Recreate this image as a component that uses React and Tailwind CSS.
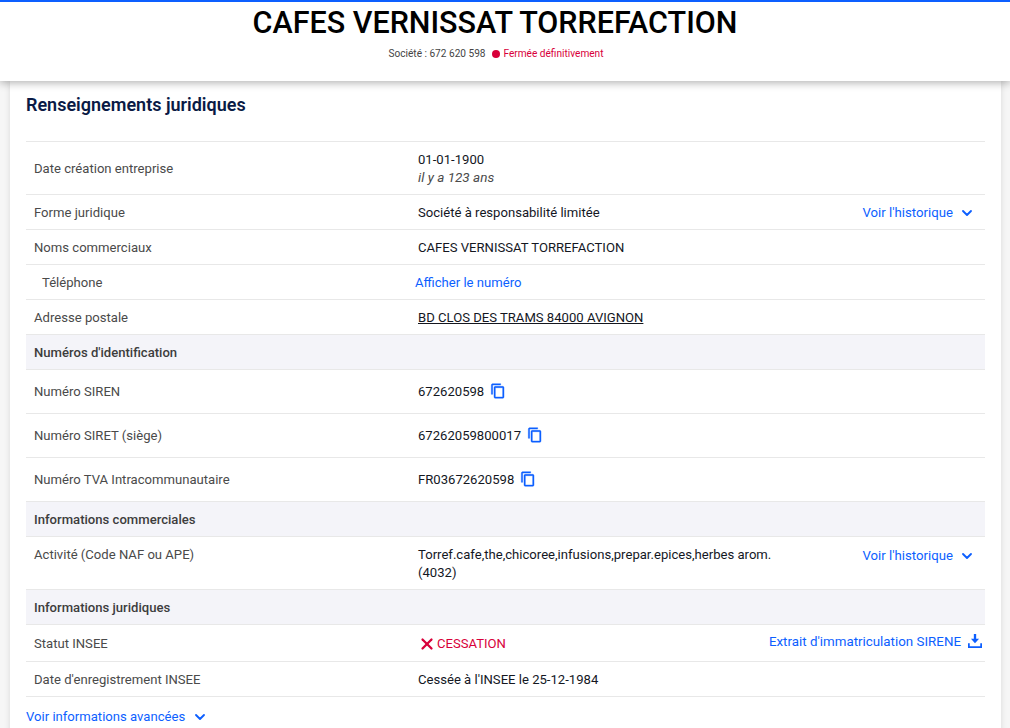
import { ChevronDown, X } from "lucide-react";

const CopyIcon = () => (
  <svg viewBox="0 0 24 24" className="mb-[1px] ml-[6px] h-[16px] w-[16px] fill-[#0d5fff] stroke-[#0d5fff] stroke-[0.6]">
    <path d="M16 1H4c-1.1 0-2 .9-2 2v14h2V3h12V1zm3 4H8c-1.1 0-2 .9-2 2v14c0 1.1.9 2 2 2h11c1.1 0 2-.9 2-2V7c0-1.1-.9-2-2-2zm0 16H8V7h11v14z" />
  </svg>
);

const DownloadIcon = () => (
  <svg viewBox="0 0 24 24" className="mb-[2px] ml-[7px] h-[14px] w-[14px] fill-[#0d5fff]">
    <path d="M10 0h4v8h5l-7 8-7-8h5zM0 16h3v5h18v-5h3v8H0z" />
  </svg>
);

const History = () => (
  <a className="flex items-center pr-[10px] text-[13.2px] text-[#0d5fff]">
    Voir l'historique
    <ChevronDown className="ml-[6px] h-[16px] w-[16px]" strokeWidth={2.8} />
  </a>
);

function Row({ label, h, children, right, top, indent, tall }) {
  return (
    <div className={`flex border-b border-[#e8e8e8] ${h} ${top ? "items-start" : "items-center"} ${top || tall ? "" : "pt-[2px]"}`}>
      <div className={`w-[392px] shrink-0 text-[#4a4a4a] ${indent ? "pl-4" : "pl-2"} ${top ? "pt-[8px]" : ""}`}>{label}</div>
      <div className={`flex-1 text-[#14171f] ${top ? "pt-[9px]" : ""}`}>{children}</div>
      {right && <div className={`${top ? "pt-[9px]" : ""}`}>{right}</div>}
    </div>
  );
}

const Section = ({ children }) => (
  <div className="flex h-[35px] items-center border-b border-[#e8e8e8] bg-[#f4f4f9] pt-[2px] pl-2 font-medium text-[#3d3d3d]">
    {children}
  </div>
);

export default function App() {
  return (
    <div className="h-[728px] overflow-hidden bg-[#f6f6f6] font-['Roboto',sans-serif] text-[13.1px]">
      <header className="relative z-10 h-[81px] border-t-2 border-[#0d5fff] bg-white pr-[20px] text-center shadow-[0_2px_8px_rgba(0,0,0,0.3)]">
        <h1 className="pt-[4px] text-[30.5px] leading-[34px] font-medium text-black">CAFES VERNISSAT TORREFACTION</h1>
        <div className="mt-[7px] flex items-center justify-center pl-[2px] text-[10.1px] leading-[14px]">
          <span className="text-[#444]">Société : 672 620 598</span>
          <span className="mr-[4px] ml-[6px] h-[8px] w-[8px] rounded-full bg-[#d8003a]" />
          <span className="text-[#d8003a]">Fermée définitivement</span>
        </div>
      </header>

      <main className="mx-[10px] h-[700px] w-[991px] bg-white px-4 shadow-[0_0_6px_rgba(0,0,0,0.12)]">
        <h2 className="h-[61px] border-b border-[#e8e8e8] pt-[12px] text-[18px] leading-[24px] font-semibold text-[#0a1a45]">
          Renseignements juridiques
        </h2>

        <Row label="Date création entreprise" h="h-[53px]">
          <div className="leading-[18px]">01-01-1900</div>
          <div className="-mt-[1px] mb-[1px] text-[13.5px] leading-[18px] text-[#4a4a4a] italic">il y a 123 ans</div>
        </Row>
        <Row label="Forme juridique" h="h-[35px]" right={<History />}>Société à responsabilité limitée</Row>
        <Row label="Noms commerciaux" h="h-[35px]">CAFES VERNISSAT TORREFACTION</Row>
        <Row label="Téléphone" h="h-[35px]" indent>
          <a className="-ml-[3px] text-[#0d5fff]">Afficher le numéro</a>
        </Row>
        <Row label="Adresse postale" h="h-[35px]">
          <span className="underline">BD CLOS DES TRAMS 84000 AVIGNON</span>
        </Row>

        <Section>Numéros d'identification</Section>
        <Row label="Numéro SIREN" h="h-[44px]" tall>
          <div className="flex items-center">672620598 <CopyIcon /></div>
        </Row>
        <Row label="Numéro SIRET (siège)" h="h-[44px]" tall>
          <div className="flex items-center">67262059800017 <CopyIcon /></div>
        </Row>
        <Row label="Numéro TVA Intracommunautaire" h="h-[44px]" tall>
          <div className="flex items-center">FR03672620598 <CopyIcon /></div>
        </Row>

        <Section>Informations commerciales</Section>
        <Row label="Activité (Code NAF ou APE)" h="h-[53px]" top right={<History />}>
          <div className="w-[370px] leading-[18px]">Torref.cafe,the,chicoree,infusions,prepar.epices,herbes arom. (4032)</div>
        </Row>

        <Section>Informations juridiques</Section>
        <Row
          label="Statut INSEE"
          h="h-[37px]"
          right={
            <a className="-mt-[3px] flex items-center pr-[3px] text-[13.35px] text-[#0d5fff]">
              Extrait d'immatriculation SIRENE
              <DownloadIcon />
            </a>
          }
        >
          <div className="flex items-center text-[#d8003a]">
            <X className="mr-[1px] h-[18px] w-[18px]" strokeWidth={3} />
            CESSATION
          </div>
        </Row>
        <Row label="Date d'enregistrement INSEE" h="h-[35px]">Cessée à l'INSEE le 25-12-1984</Row>

        <a className="mt-[10px] flex items-center text-[#0d5fff]">
          Voir informations avancées
          <ChevronDown className="ml-[7px] h-[16px] w-[16px]" strokeWidth={2.8} />
        </a>
      </main>
    </div>
  );
}
